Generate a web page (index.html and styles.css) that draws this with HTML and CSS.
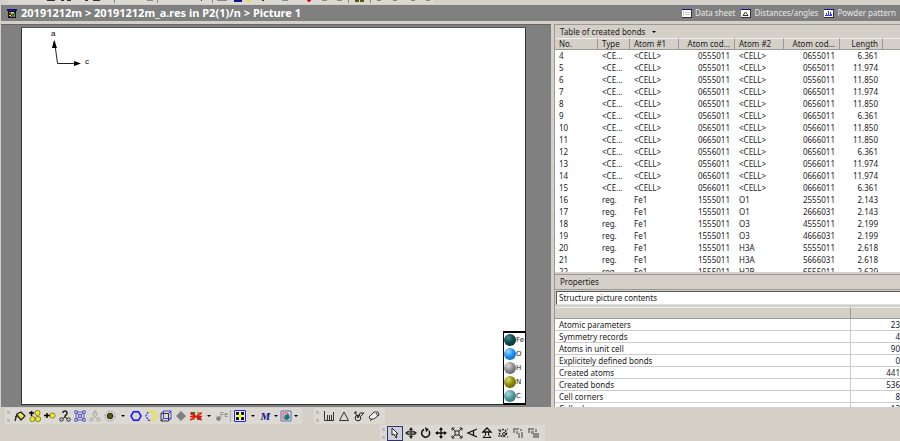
FILE: index.html
```html
<!DOCTYPE html>
<html lang="en">
<head>
<meta charset="utf-8">
<title>20191212m</title>
<link rel="stylesheet" href="styles.css">
</head>
<body>
<svg class="strip" viewBox="0 0 900 5" preserveAspectRatio="xMinYMin slice" aria-hidden="true">
  <path fill="#dcd9d2" d="M8 0H434V4H8z"/>
  <path fill="#333" d="M47 0h8v1h-8zM61 0h3v1h-3zM67 0h4v1h-4zM85 0h3v1h-3zM93 0h7v1h-7zM201 0h1v1h-1zM262 0h2v1h-2z"/>
  <path fill="#888" d="M114 0h1v3h-1zM147 0h6v1h-6zM157 0h1v3h-1zM212 0h1v3h-1zM217 0h10v1h-10zM282 0h6v1h-6zM322 0h5v1h-5zM337 0h5v1h-5zM348 0h1v3h-1zM370 0h1v3h-1zM377 0h4v1h-4zM393 0h4v1h-4zM411 0h4v1h-4zM426 0h4v1h-4z"/>
  <path fill="#11118c" d="M234 0h8v2h-8z"/>
  <path fill="#e8e020" d="M247 0h3v2h-3z"/>
  <path fill="#e01010" d="M307 0h4v1h-1v1h-2v-1h-1z"/>
  <path fill="#55550a" d="M355 0h4v2h-4zM360 0h4v2h-4z"/>
</svg>

<header class="titlebar">
  <svg class="app-icon" viewBox="0 0 10 9" aria-hidden="true">
    <path fill="#11118c" d="M0 0h10v2H0z"/><path fill="#111" d="M1 2h8v7H1z"/>
    <path fill="#e22" d="M2 3h2v2H2zM5 6h2v2H5z"/><path fill="#ee2" d="M4 3h3v1H4zM2 6h2v1H2z"/><path fill="#2c3" d="M4 4h2v2H4zM7 5h1v3H7z"/><path fill="#28f" d="M3 7h2v1H3zM6 4h2v1H6z"/>
  </svg>
  <h1>20191212m &gt; 20191212m_a.res in P2(1)/n &gt; Picture 1</h1>
  <nav class="views">
    <a href="#data"><svg viewBox="0 0 10 9" aria-hidden="true"><path fill="#333" d="M0 0h10v9H0z"/><path fill="#11118c" d="M0 0h10v1H0z"/><path fill="#fff" d="M0 1h9v7H0z"/><path fill="#ccc" d="M3 3h5v1H3zM3 5h5v1H3zM1 2h1v5H1z"/></svg>Data sheet</a>
    <a href="#dist"><svg viewBox="0 0 10 9" aria-hidden="true"><path fill="#333" d="M0 0h10v9H0z"/><path fill="#11118c" d="M0 0h10v1H0z"/><path fill="#fff" d="M0 1h9v7H0z"/><path fill="none" stroke="#333" d="M2 6.500 4.500 3 7 6.500z"/></svg>Distances/angles</a>
    <a href="#powder"><svg viewBox="0 0 10 9" aria-hidden="true"><path fill="#333" d="M0 0h10v9H0z"/><path fill="#11118c" d="M0 0h10v1H0z"/><path fill="#fff" d="M0 1h9v7H0z"/><path fill="#33f" d="M1 7h7V5H7V3H6v3H5V2H4v4H3V4H2v2H1z"/></svg>Powder pattern</a>
  </nav>
</header>

<main>
  <section class="canvas" aria-label="Picture 1">
    <div class="sheet">
      <svg class="axes" viewBox="0 0 44 44" role="img" aria-label="Axes a and c">
        <path fill="none" stroke="#222" d="M10.500 13 13.500 35.500H31"/>
        <path fill="#000" d="M10 12l3 8H8zM37 35.500l-7-2.500v5z"/>
        <text x="7" y="8">a</text><text x="41" y="36">c</text>
      </svg>
      <ul class="legend">
        <li><i class="ball fe"></i>Fe</li>
        <li><i class="ball o"></i>O</li>
        <li><i class="ball h"></i>H</li>
        <li><i class="ball n"></i>N</li>
        <li><i class="ball c"></i>C</li>
      </ul>
    </div>
  </section>

  <aside class="side">
    <section class="panel bonds">
      <button class="caption" type="button">Table of created bonds <span class="caret"></span></button>
      <div class="clip">
      <table>
        <colgroup><col class="w-no"><col class="w-type"><col class="w-atom"><col class="w-code"><col class="w-atom"><col class="w-code"><col class="w-len"><col></colgroup>
        <thead><tr><th>No.</th><th>Type</th><th>Atom #1</th><th class="num">Atom cod...</th><th>Atom #2</th><th class="num">Atom cod...</th><th class="num">Length</th><th></th></tr></thead>
        <tbody>
        <tr><td>4</td><td>&lt;CE...</td><td>&lt;CELL&gt;</td><td class="num">0555011</td><td>&lt;CELL&gt;</td><td class="num">0655011</td><td class="num">6.361</td><td></td></tr>
        <tr><td>5</td><td>&lt;CE...</td><td>&lt;CELL&gt;</td><td class="num">0555011</td><td>&lt;CELL&gt;</td><td class="num">0565011</td><td class="num">11.974</td><td></td></tr>
        <tr><td>6</td><td>&lt;CE...</td><td>&lt;CELL&gt;</td><td class="num">0555011</td><td>&lt;CELL&gt;</td><td class="num">0556011</td><td class="num">11.850</td><td></td></tr>
        <tr><td>7</td><td>&lt;CE...</td><td>&lt;CELL&gt;</td><td class="num">0655011</td><td>&lt;CELL&gt;</td><td class="num">0665011</td><td class="num">11.974</td><td></td></tr>
        <tr><td>8</td><td>&lt;CE...</td><td>&lt;CELL&gt;</td><td class="num">0655011</td><td>&lt;CELL&gt;</td><td class="num">0656011</td><td class="num">11.850</td><td></td></tr>
        <tr><td>9</td><td>&lt;CE...</td><td>&lt;CELL&gt;</td><td class="num">0565011</td><td>&lt;CELL&gt;</td><td class="num">0665011</td><td class="num">6.361</td><td></td></tr>
        <tr><td>10</td><td>&lt;CE...</td><td>&lt;CELL&gt;</td><td class="num">0565011</td><td>&lt;CELL&gt;</td><td class="num">0566011</td><td class="num">11.850</td><td></td></tr>
        <tr><td>11</td><td>&lt;CE...</td><td>&lt;CELL&gt;</td><td class="num">0665011</td><td>&lt;CELL&gt;</td><td class="num">0666011</td><td class="num">11.850</td><td></td></tr>
        <tr><td>12</td><td>&lt;CE...</td><td>&lt;CELL&gt;</td><td class="num">0556011</td><td>&lt;CELL&gt;</td><td class="num">0656011</td><td class="num">6.361</td><td></td></tr>
        <tr><td>13</td><td>&lt;CE...</td><td>&lt;CELL&gt;</td><td class="num">0556011</td><td>&lt;CELL&gt;</td><td class="num">0566011</td><td class="num">11.974</td><td></td></tr>
        <tr><td>14</td><td>&lt;CE...</td><td>&lt;CELL&gt;</td><td class="num">0656011</td><td>&lt;CELL&gt;</td><td class="num">0666011</td><td class="num">11.974</td><td></td></tr>
        <tr><td>15</td><td>&lt;CE...</td><td>&lt;CELL&gt;</td><td class="num">0566011</td><td>&lt;CELL&gt;</td><td class="num">0666011</td><td class="num">6.361</td><td></td></tr>
        <tr><td>16</td><td>reg.</td><td>Fe1</td><td class="num">1555011</td><td>O1</td><td class="num">2555011</td><td class="num">2.143</td><td></td></tr>
        <tr><td>17</td><td>reg.</td><td>Fe1</td><td class="num">1555011</td><td>O1</td><td class="num">2666031</td><td class="num">2.143</td><td></td></tr>
        <tr><td>18</td><td>reg.</td><td>Fe1</td><td class="num">1555011</td><td>O3</td><td class="num">4555011</td><td class="num">2.199</td><td></td></tr>
        <tr><td>19</td><td>reg.</td><td>Fe1</td><td class="num">1555011</td><td>O3</td><td class="num">4666031</td><td class="num">2.199</td><td></td></tr>
        <tr><td>20</td><td>reg.</td><td>Fe1</td><td class="num">1555011</td><td>H3A</td><td class="num">5555011</td><td class="num">2.618</td><td></td></tr>
        <tr><td>21</td><td>reg.</td><td>Fe1</td><td class="num">1555011</td><td>H3A</td><td class="num">5666031</td><td class="num">2.618</td><td></td></tr>
        <tr><td>22</td><td>reg.</td><td>Fe1</td><td class="num">1555011</td><td>H2B</td><td class="num">6555011</td><td class="num">2.629</td><td></td></tr>
        </tbody>
      </table>
      </div>
    </section>

    <section class="panel props">
      <label class="caption" for="topic">Properties</label>
      <select id="topic"><option>Structure picture contents</option></select>
      <div class="clip">
      <table class="lined">
        <colgroup><col><col class="w-value"></colgroup>
        <thead><tr><th></th><th></th></tr></thead>
        <tbody>
        <tr><td>Atomic parameters</td><td class="num">23</td></tr>
        <tr><td>Symmetry records</td><td class="num">4</td></tr>
        <tr><td>Atoms in unit cell</td><td class="num">90</td></tr>
        <tr><td>Explicitely defined bonds</td><td class="num">0</td></tr>
        <tr><td>Created atoms</td><td class="num">441</td></tr>
        <tr><td>Created bonds</td><td class="num">536</td></tr>
        <tr><td>Cell corners</td><td class="num">8</td></tr>
        <tr><td>Cell edges</td><td class="num">12</td></tr>
        </tbody>
      </table>
      </div>
    </section>
  </aside>
</main>

<footer>
  <div class="row">
    <div class="toolbar">
      <span class="grip"></span>
      <button type="button" aria-label="Build"><svg viewBox="0 0 12 12"><path fill="#ee2" d="M5 4l3-1 2 4-4 3z"/><path fill="none" stroke="#222" stroke-width="1.300" d="M1 11 3 4l4-2 4 4-4 4-4-5M1 7l2-1"/></svg></button>
      <button type="button" aria-label="Add all atoms"><svg viewBox="0 0 12 12"><path stroke="#000" stroke-width="1.500" d="M0 3h5M2.500 1v5"/><g fill="#f2ee10" stroke="#554" stroke-width=".7"><circle cx="8.500" cy="3" r="2.600"/><circle cx="3.500" cy="9" r="2.600"/><circle cx="9" cy="9" r="2.600"/></g></svg></button>
      <button type="button" aria-label="Add atom"><svg viewBox="0 0 12 12"><path stroke="#000" stroke-width="1.500" d="M0 5.500h6M3 3v5"/><circle cx="8.500" cy="5.500" r="2.600" fill="#f2ee10" stroke="#554" stroke-width=".7"/></svg></button>
      <button type="button" aria-label="Connectivity"><svg viewBox="0 0 12 12" fill="none" stroke="#222"><path stroke-width="1.500" d="M4 3q0-2 2-2t2 2-2 3v1"/><path d="M6 7 4 8.500M6 7l2 1.500"/><circle cx="2.500" cy="9.500" r="1.700"/><circle cx="9.500" cy="9.500" r="1.700"/></svg></button>
      <button type="button" aria-label="Fill cell"><svg viewBox="0 0 12 12" fill="none" stroke="#33c" stroke-width=".8"><path d="M2 2l8 8M10 2l-8 8M2 2h8v8H2z"/><g fill="#cde"><circle cx="2" cy="2" r="1.500"/><circle cx="10" cy="2" r="1.500"/><circle cx="2" cy="10" r="1.500"/><circle cx="10" cy="10" r="1.500"/><circle cx="6" cy="6" r="1.500"/></g></svg></button>
      <button type="button" aria-label="Fragment" disabled><svg viewBox="0 0 12 12" fill="none" stroke="#999" stroke-width=".8"><path d="M5 1h2v3h1.500L6 6.500 3.500 4H5zM6 6.500 4 8.500M6 6.500l2 2"/><circle cx="2.500" cy="9.500" r="1.700"/><circle cx="9.500" cy="9.500" r="1.700"/></svg></button>
      <button type="button" aria-label="Coordination sphere"><svg viewBox="0 0 12 12"><circle cx="6" cy="6" r="5" fill="none" stroke="#999" stroke-dasharray="2 1"/><circle cx="6" cy="6" r="2.800" fill="#5c5a00" stroke="#222"/></svg></button>
      <button class="drop" type="button" aria-label="More spheres"><span class="caret"></span></button>
      <button type="button" aria-label="Ring"><svg viewBox="0 0 12 12"><path fill="none" stroke="#11f" stroke-width="1.500" d="M1 6l2.500-4.300h5L11 6l-2.500 4.300h-5z"/></svg></button>
      <button type="button" aria-label="Broken ring"><svg viewBox="0 0 12 12" fill="none" stroke-width="1.500"><path stroke="#f0e800" d="M3 2l.5-.3h5L11 6l-2.500 4.300H6"/><path stroke="#44f" stroke-dasharray="2 1" d="M3 2 1 6l2.500 4.300H6"/></svg></button>
      <button type="button" aria-label="Cell edges"><svg viewBox="0 0 12 12" fill="none" stroke-width=".9"><path stroke="#222" d="M1 3.500h7.500V11H1zM8.500 3.500 11 1M1 11l2.500-2.500"/><path stroke="#33d" d="M3.500 1H11v7.500H3.500zM1 3.500 3.500 1M8.500 11 11 8.500"/></svg></button>
      <button type="button" aria-label="Polyhedra" disabled><svg viewBox="0 0 12 12"><path fill="#808080" d="M6 1l5 5-5 5-5-5z"/></svg></button>
      <button type="button" aria-label="Delete atoms"><svg viewBox="0 0 12 12"><path fill="#554" d="M1 2h4v3H1zM7 7h4v3H7z"/><path fill="#aa2" d="M7 2h4v2H7zM2 8h3v2H2z"/><path stroke="#e11" stroke-width="1.500" d="M0 3l12 7M0 10l12-7M0 6.500h12"/></svg></button>
      <button class="drop" type="button" aria-label="More deletions"><span class="caret"></span></button>
      <button type="button" aria-label="Label atoms" disabled><svg viewBox="0 0 12 12"><circle cx="2.500" cy="8.500" r="2.300" fill="#808080"/><text class="fe-label" x="4" y="7">Fe</text></svg></button>
      <span class="sep"></span>
      <button type="button" aria-label="Model"><svg viewBox="0 0 12 12"><path fill="#eef" stroke="#22e" d="M.5.5h11v11H.5z"/><path fill="#111" d="M2 2h3v3H2zM7 2h3v3H7zM2 7h3v3H2zM7 7h3v3H7z"/><path fill="#ee2" d="M6 3l3 3-3 3-3-3z"/></svg></button>
      <button class="drop" type="button" aria-label="More models"><span class="caret"></span></button>
      <button class="letter" type="button" aria-label="Measure">M</button>
      <button class="drop tight" type="button" aria-label="More measures"><span class="caret"></span></button>
      <button type="button" aria-label="Rendering"><svg viewBox="0 0 12 12"><path fill="#dde" stroke="#66a" d="M1 1h10v10H1z"/><path fill="none" stroke="#d44" d="M3 3h5v6H3z"/><circle cx="7" cy="7" r="2.700" fill="#088070"/></svg></button>
      <button class="drop tight" type="button" aria-label="More renderings"><span class="caret"></span></button>
    </div>
    <div class="toolbar">
      <span class="grip"></span>
      <button type="button" aria-label="Distance"><svg viewBox="0 0 12 12" fill="none" stroke="#333"><path d="M1.500 1v9.500H11M4.500 5v5M6.500 5v5M8.500 5v5M10.500 2v8"/></svg></button>
      <button type="button" aria-label="Angle"><svg viewBox="0 0 12 12" fill="none" stroke="#333"><path d="M6 2l4.500 8.500h-9z"/></svg></button>
      <button type="button" aria-label="Torsion"><svg viewBox="0 0 12 12" fill="none" stroke="#222"><circle cx="5" cy="8" r="2.800"/><path d="M2 2l3 6 2-5h4L8 6M2 4V2h2"/></svg></button>
      <button type="button" aria-label="Plane"><svg viewBox="0 0 12 12" fill="#eee" stroke="#333"><path d="M1 7l5-5h4l1 3-5 4H2z"/><path d="M4 9l-2 2M8 3l2 3"/></svg></button>
    </div>
  </div>
  <div class="row second">
    <div class="toolbar">
      <span class="grip"></span>
      <button class="active" type="button" aria-label="Select"><svg viewBox="0 0 12 12" fill="#fff" stroke="#222"><path d="M3 1v7l2-1 2 4 1-1-1-3h2z"/></svg></button>
      <div class="group">
      <button type="button" aria-label="Rotate"><svg viewBox="0 0 12 12" fill="none" stroke="#222"><path d="M6 1v10M1 6h10"/><ellipse cx="6" cy="6" rx="4.500" ry="2"/><path fill="#222" stroke="none" d="M4 3l2-3 2 3zM4 9l2 3 2-3zM2.500 4 0 6l2.500 2zM9.500 4 12 6 9.500 8z"/></svg></button>
      <button type="button" aria-label="Spin"><svg viewBox="0 0 12 12" fill="none" stroke="#111" stroke-width="1.500"><path d="M4 2.500a4 4 0 1 0 5 1.500"/><path fill="#111" stroke="none" d="M5 0l4 2.500L6 5z"/></svg></button>
      <button type="button" aria-label="Shift"><svg viewBox="0 0 12 12"><path stroke="#111" stroke-width="1.300" d="M6 1v10M1 6h10"/><path fill="#111" d="M4 3l2-3 2 3zM4 9l2 3 2-3zM3 4 0 6l3 2zM9 4l3 2-3 2z"/></svg></button>
      </div>
      <div class="group">
      <button type="button" aria-label="Enlarge"><svg viewBox="0 0 12 12" fill="none" stroke="#222"><path d="M4 4h4v4H4zM1 1l3 3M11 1 8 4M1 11l3-3M11 11 8 8"/><path d="M1 3.500V1h2.500M8.500 1H11v2.500M1 8.500V11h2.500M8.500 11H11V8.500"/></svg></button>
      <button type="button" aria-label="Perspective"><svg viewBox="0 0 12 12" fill="none" stroke="#111" stroke-width="1.300"><path d="M11 2 2 6l9 4M7.500 4v4"/></svg></button>
      <button type="button" aria-label="Walk"><svg viewBox="0 0 12 12" fill="none" stroke="#111"><path stroke-width="1.300" d="M2 5l4-4 4 4z"/><path d="M4.500 5v3L2 10.500h8L7.500 8V5"/></svg></button>
      </div>
      <div class="group">
      <button type="button" aria-label="Animate"><svg viewBox="0 0 12 12" fill="none" stroke="#222"><circle cx="6" cy="6" r="3.500" stroke-width="1.500" stroke-dasharray="2 1"/><circle cx="7" cy="7" r="1.500"/><path d="M1 3h2M1 9h2M10 2h1M10 10h1"/></svg></button>
      <button type="button" aria-label="Pause" disabled><svg viewBox="0 0 12 12" fill="#8a8a8a"><path d="M1 1h6v2H3v3H1zM4 4h2v3H4zM6 6h2v5H6zM9 5h2v6H9zM8 2h2v2H8z"/></svg></button>
      <button type="button" aria-label="Stop" disabled><svg viewBox="0 0 12 12" fill="#8a8a8a"><path d="M1 1h6v2H3v3H1zM4 4h3v3H4zM6 6h6v5H6zM8 2h2v3H8z"/></svg></button>
      </div>
    </div>
  </div>
</footer>
</body>
</html>
```
FILE: styles.css
```css
* { box-sizing: border-box; }

body {
  margin: 0;
  height: 100vh;
  display: flex;
  flex-direction: column;
  overflow: hidden;
  background: #d4d0c8;
  color: #1a1a1a;
  font: 8px/12px "Noto Sans", "DejaVu Sans", sans-serif;
}

button, select { font: inherit; color: inherit; }

.strip { flex: none; width: 100%; height: 5px; }

.titlebar {
  flex: none;
  display: flex;
  align-items: center;
  height: 16px;
  margin-left: 1px;
  padding: 0 4px 0 6px;
  background: #808080;
  color: #fff;
}
.titlebar svg { flex: none; width: 10px; height: 9px; }
.titlebar h1 {
  margin: 0 auto 0 4px;
  font: bold 11px/16px "Noto Sans", "DejaVu Sans", sans-serif;
  white-space: nowrap;
}
.views { display: flex; gap: 6px; }
.views a {
  display: flex;
  align-items: center;
  gap: 3px;
  color: #e8e8e8;
  text-decoration: none;
  white-space: nowrap;
}

main {
  flex: 1;
  min-height: 0;
  display: grid;
  grid-template-columns: minmax(0, 1fr) 346px;
  gap: 3px;
  margin: 3px 0 0 1px;
}

.canvas {
  padding: 2px 25px 2px 20px;
  background: #808080;
  border-top: 1px solid #666;
}
.sheet {
  position: relative;
  height: 100%;
  background: #fff;
  border: 1px solid #333;
  border-top-color: #555;
}
.axes {
  display: block;
  width: 44px;
  height: 44px;
  margin: 0 0 0 22px;
  overflow: visible;
}
.axes text { font: 8px "Liberation Sans", sans-serif; }

.legend {
  position: absolute;
  right: -1px;
  bottom: -1px;
  margin: 0;
  padding: 0;
  width: 23px;
  border: 1px solid #000;
  border-top-width: 2px;
  border-bottom-width: 2px;
  background: #fff;
  list-style: none;
  font: 7px/14px "DejaVu Sans", sans-serif;
}
.legend li { display: flex; align-items: center; height: 14px; }
.ball { flex: none; width: 12px; height: 12px; border-radius: 50%; }
.fe { background: radial-gradient(circle at 35% 30%, #4a8a8a, #0a4a4a 45%, #032828); }
.o { background: radial-gradient(circle at 35% 30%, #a0dcff, #1890f0 45%, #0a60b0); }
.h { background: radial-gradient(circle at 35% 30%, #ddd, #8c8c8c 45%, #505050); }
.n { background: radial-gradient(circle at 35% 30%, #dcdc70, #8c8c08 45%, #4c4c00); }
.c { background: radial-gradient(circle at 35% 30%, #b0dcdc, #4c9c9c 45%, #285c5c); }

.side {
  display: flex;
  flex-direction: column;
  gap: 2px;
  min-height: 0;
  border-left: 1px solid #999;
}
.panel { display: flex; flex-direction: column; min-height: 0; border-top: 1px solid #999; }
.bonds { height: 248px; flex: none; }
.props { flex: 1; }
.clip { flex: 1; min-height: 0; overflow: hidden; background: #fff; }

.caption {
  flex: none;
  display: flex;
  align-items: center;
  height: 13px;
  padding: 0 5px;
  border: 0;
  background: none;
  text-align: left;
}
.caption .caret { margin-left: 7px; }
.props .caption { height: 15px; border-bottom: 1px solid #999; }

.caret {
  display: inline-block;
  border: 2px solid transparent;
  border-top-color: #000;
  border-bottom: 0;
}

select {
  flex: none;
  appearance: none;
  height: 14px;
  margin: 1px 0 2px 1px;
  padding: 0 2px;
  border: 1px solid #555;
  border-right: 0;
  border-bottom-color: #ddd;
  border-radius: 0;
  background: #fff;
}

table { width: 100%; border-collapse: separate; border-spacing: 0; table-layout: fixed; }
th, td { height: 12px; padding: 0 4px; font-weight: normal; text-align: left; vertical-align: top; white-space: nowrap; overflow: hidden; }
td { line-height: 12px; }
th {
  line-height: 10px;
  background: #d4d0c8;
  border-right: 1px solid #999;
  border-bottom: 1px solid #999;
  border-top: 1px solid #eee;
}
th:last-child { border-right: 0; }
td.num { padding-right: 5px; }
.num { text-align: right; }
.w-no { width: 43px; }
.w-type { width: 32px; }
.w-atom { width: 49px; }
.w-code { width: 56px; }
.w-len { width: 43px; }
.w-value { width: 49px; }
.lined td { line-height: 11px; padding-top: 0; border-bottom: 1px solid #ccc; }
.lined td:first-child { border-right: 1px solid #ccc; }
.lined td.num { padding-right: 0; }

footer { flex: none; }
.row { display: flex; gap: 12px; padding: 1px 0 0 5px; height: 18px; }
.second { height: 16px; padding: 0 0 0 380px; }
.toolbar { display: flex; align-items: center; height: 16px; padding-right: 4px; background: #dcd9d2; }
.group { display: flex; margin-right: 1px; }
.grip { width: 3px; height: 11px; margin: 0 2px; border-left: 3px dotted #bbb; }
.sep { width: 1px; height: 12px; margin: 0 1px; background: #aaa; }

.toolbar button {
  display: flex;
  align-items: center;
  justify-content: center;
  flex: none;
  width: 15px;
  height: 15px;
  padding: 0;
  border: 0;
  background: none;
}
.toolbar svg { flex: none; width: 12px; height: 12px; }
.toolbar .drop { width: 11px; }
.toolbar .tight { width: 5px; }
.toolbar .letter { color: #11118c; font: italic bold 11px/12px "Liberation Serif", serif; }
.toolbar .active { width: 16px; border: 1px solid #336; background: #ccd0dc; }
.fe-label { font: 7px "Liberation Sans", sans-serif; fill: #777; }
```
